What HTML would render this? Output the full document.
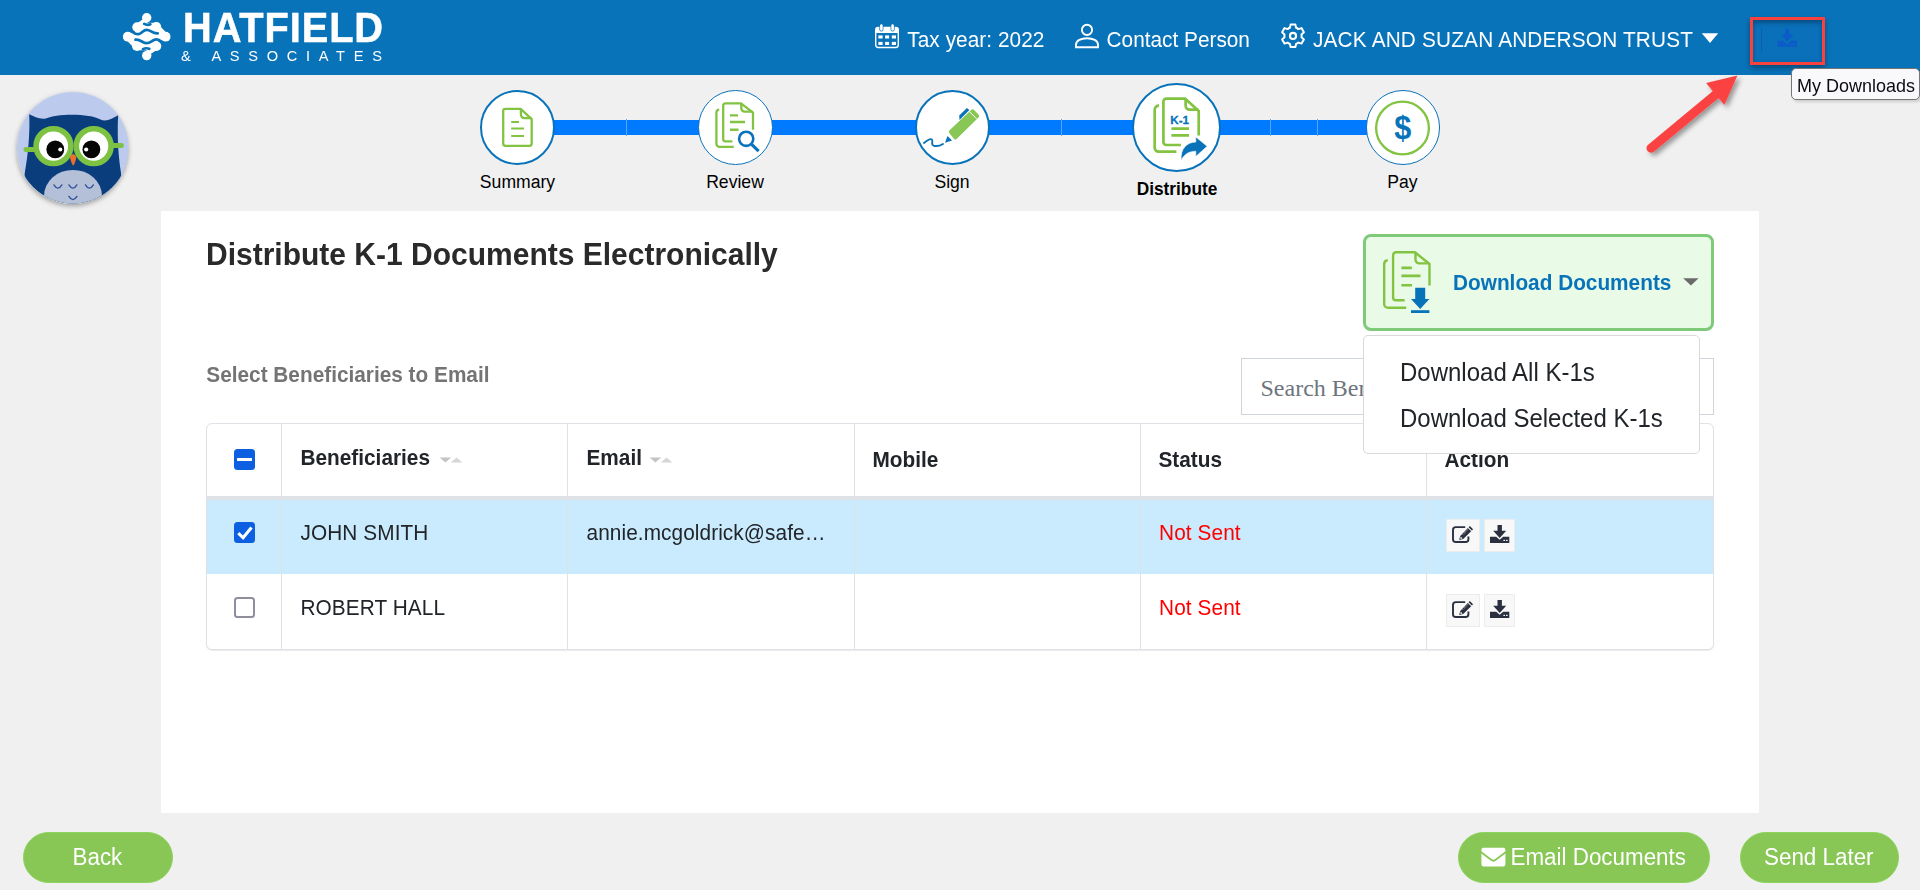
<!DOCTYPE html>
<html>
<head>
<meta charset="utf-8">
<title>Distribute K-1</title>
<style>
html,body{margin:0;padding:0;}
body{width:1920px;height:890px;overflow:hidden;background:#f0f0f0;font-family:"Liberation Sans",sans-serif;position:relative;color:#212529;}
.abs{position:absolute;}
.t{position:absolute;white-space:nowrap;line-height:1;transform:scaleY(1.06);transform-origin:0 84.65%;}
#hdr{position:absolute;left:0;top:0;width:1920px;height:75px;background:#0973ba;}
.ht{color:#fff;font-size:20.8px;}
#panel{position:absolute;left:161px;top:211px;width:1598px;height:601.8px;background:#fff;}
.lbl{position:absolute;font-size:17.6px;color:#000;white-space:nowrap;line-height:1;transform:translateX(-50%) scaleY(1.06);transform-origin:50% 84.65%;}
.circ{position:absolute;border-radius:50%;background:#fff;border:2px solid #0973ba;box-sizing:border-box;}
.bar{position:absolute;top:120px;height:15px;background:#007bff;}
.bdiv{position:absolute;top:119px;height:17px;width:1px;background:#5aa5f5;}
.pill{position:absolute;top:832px;height:50px;border-radius:26px;background:#88c656;border:1px solid #8bd35a;box-sizing:border-box;color:#fff;font-size:22.4px;}
.th{position:absolute;font-weight:bold;font-size:20.8px;color:#212529;white-space:nowrap;line-height:1;transform:scaleY(1.06);transform-origin:0 84.65%;}
.td{position:absolute;font-size:20.8px;color:#212529;white-space:nowrap;line-height:1;transform:scaleY(1.06);transform-origin:0 84.65%;letter-spacing:0.08px;}
.vline{position:absolute;top:424px;width:1px;height:225.4px;background:#dee2e6;}
.abtn{position:absolute;background:#f8f8f8;border:1px solid #ececec;box-sizing:border-box;}
</style>
</head>
<body>
<!--HEADER-->
<div id="hdr"></div>
<svg class="abs" style="left:118px;top:8px" width="60" height="58" viewBox="118 8 60 58">
 <rect x="135" y="27" width="23" height="19" fill="#fff"/>
 <g fill="none" stroke="#fff" stroke-linecap="round">
  <path d="M137.2 27.2 L156.4 26.9" stroke-width="8.4"/>
  <path d="M127.8 36.7 L165.6 36.7" stroke-width="8.8"/>
  <path d="M136.9 46.1 L156.4 46.1" stroke-width="8.4"/>
  <path d="M156.4 26.9 L165.6 36.7" stroke-width="6.6"/>
  <path d="M127.8 36.7 L136.9 46.1" stroke-width="6.6"/>
  <path d="M146.7 17.8 C146.2 23 140.5 22.5 137.2 27.2" stroke-width="5.6"/>
  <path d="M146.7 55.6 C147.2 50.4 153 51 156.4 46.1" stroke-width="5.6"/>
 </g>
 <g fill="#fff">
  <circle cx="146.7" cy="17.8" r="4.7"/><circle cx="137.2" cy="27.2" r="4.9"/><circle cx="156.4" cy="26.9" r="4.8"/>
  <circle cx="127.8" cy="36.7" r="4.9"/><circle cx="165.6" cy="36.7" r="4.9"/>
  <circle cx="136.9" cy="46.1" r="4.9"/><circle cx="156.4" cy="46.1" r="4.9"/><circle cx="146.7" cy="55.6" r="4.7"/>
 </g>
 <g fill="none" stroke="#0973ba" stroke-width="2.7" stroke-linecap="round">
  <path d="M144.2 23.9 Q147.2 25.6 150.4 24.3"/>
  <path d="M130.6 29.8 C132.5 32.8 137 35.2 140 33.6 C142.8 32.2 143.5 29.8 146.7 29.8 C150.5 29.8 152.5 33.9 157.7 33.4"/>
  <path d="M135.5 39.7 C140.5 39 142.5 43.2 146.7 43.2 C150 43.2 151.5 41 154 39.9 C157 38.6 161 40.2 163 43.6"/>
  <path d="M142.9 49.1 Q146 47.6 149.3 48.8"/>
 </g>
 <path d="M126.5 27.5 L131.8 31.4 M167 46 L161.8 42" stroke="#0973ba" stroke-width="3.2" fill="none" stroke-linecap="round"/>
</svg>
<div class="t" id="hat" style="left:183px;top:7.5px;font-size:39.8px;font-weight:bold;color:#fff;line-height:40px;letter-spacing:0.9px;-webkit-text-stroke:0.5px #fff;">HATFIELD</div>
<div class="t" id="assoc" style="left:181px;top:47.5px;font-size:14.6px;color:#fff;letter-spacing:8.7px;line-height:16px;">&amp; ASSOCIATES</div>
<!-- calendar icon -->
<svg class="abs" style="left:875px;top:24px" width="24" height="25" viewBox="0 0 24 25">
 <rect x="0.7" y="3.5" width="22.6" height="20" rx="2.4" fill="none" stroke="#fff" stroke-width="1.4"/>
 <path d="M0.7 9 V5.9 a2.4 2.4 0 0 1 2.4 -2.4 H20.9 a2.4 2.4 0 0 1 2.4 2.4 V9 Z" fill="#fff"/>
 <rect x="4.4" y="-0.4" width="4" height="7.8" rx="2" fill="#0973ba"/>
 <rect x="15.6" y="-0.4" width="4" height="7.8" rx="2" fill="#0973ba"/>
 <rect x="5.1" y="0.3" width="2.6" height="6.4" rx="1.3" fill="#fff"/>
 <rect x="16.3" y="0.3" width="2.6" height="6.4" rx="1.3" fill="#fff"/>
 <g fill="#fff"><rect x="3.4" y="11.4" width="4.2" height="3.1"/><rect x="10.1" y="11.4" width="4" height="3.1"/><rect x="16.8" y="11.4" width="4.2" height="3.1"/>
 <rect x="3.4" y="17.9" width="4.2" height="3.1"/><rect x="10.1" y="17.9" width="4" height="3.1"/><rect x="16.8" y="17.9" width="4.2" height="3.1"/></g>
</svg>
<div class="t ht" id="taxy" style="left:907.3px;top:29.5px;letter-spacing:0.05px;">Tax year: 2022</div>
<!-- user icon -->
<svg class="abs" style="left:1074px;top:23px" width="26" height="27" viewBox="0 0 26 27">
 <circle cx="13" cy="6.9" r="5.1" fill="none" stroke="#fff" stroke-width="1.9"/>
 <path d="M2 24.2 V21.6 C2 17.4 7.2 15.2 13 15.2 C18.8 15.2 24 17.4 24 21.6 V24.2 Z" fill="none" stroke="#fff" stroke-width="1.9" stroke-linejoin="miter"/>
</svg>
<div class="t ht" id="cper" style="left:1106.6px;top:29.5px;">Contact Person</div>
<!-- gear icon -->
<svg class="abs" style="left:1280px;top:23px" width="26" height="26" viewBox="0 0 26 26">
 <path id="gearp" fill="none" stroke="#fff" stroke-width="2" stroke-linejoin="round" d="M10.6 1.6 h4.8 l0.7 3.2 a8.6 8.6 0 0 1 2.3 1.3 l3.1 -1 l2.4 4.2 l-2.4 2.2 a8.6 8.6 0 0 1 0 2.7 l2.4 2.2 l-2.4 4.2 l-3.1 -1 a8.6 8.6 0 0 1 -2.3 1.3 l-0.7 3.2 h-4.8 l-0.7 -3.2 a8.6 8.6 0 0 1 -2.3 -1.3 l-3.1 1 l-2.4 -4.2 l2.4 -2.2 a8.6 8.6 0 0 1 0 -2.7 l-2.4 -2.2 l2.4 -4.2 l3.1 1 a8.6 8.6 0 0 1 2.3 -1.3 z"/>
 <circle cx="13" cy="12.9" r="3.05" fill="none" stroke="#fff" stroke-width="2.1"/>
</svg>
<div class="t ht" id="trust" style="left:1313px;top:29.5px;letter-spacing:0.17px;">JACK AND SUZAN ANDERSON TRUST</div>
<svg class="abs" style="left:1701px;top:33px" width="18" height="11" viewBox="0 0 18 11"><path d="M0.8 0.3 H17.2 L9 10 Z" fill="#fff"/></svg>
<!--STEPPER-->
<div class="bar" style="left:553px;width:147px;"></div>
<div class="bar" style="left:771px;width:146px;"></div>
<div class="bar" style="left:987px;width:148px;"></div>
<div class="bar" style="left:1220px;width:148px;"></div>
<div class="bdiv" style="left:626px"></div>
<div class="bdiv" style="left:1061px"></div>
<div class="bdiv" style="left:1270px"></div>
<div class="bdiv" style="left:1317px"></div>
<div class="circ" style="left:480px;top:90px;width:75px;height:75px;"></div>
<div class="circ" style="left:698px;top:90px;width:75px;height:75px;border-width:1.9px;"></div>
<div class="circ" style="left:914.5px;top:90px;width:75px;height:75px;"></div>
<div class="circ" style="left:1132.4px;top:83.4px;width:89px;height:89px;"></div>
<div class="circ" style="left:1365.5px;top:90px;width:74.6px;height:74.6px;border-width:1.8px;"></div>
<div class="lbl" id="l1" style="left:517.5px;top:173.5px;">Summary</div>
<div class="lbl" id="l2" style="left:735px;top:173.5px;">Review</div>
<div class="lbl" id="l3" style="left:952px;top:173.5px;">Sign</div>
<div class="lbl" id="l4" style="left:1177px;top:180.5px;font-weight:bold;font-size:17.3px;">Distribute</div>
<div class="lbl" id="l5" style="left:1402.5px;top:173.5px;">Pay</div>
<!--ICONS-->
<svg class="abs" style="left:440px;top:80px" width="1020" height="100" viewBox="440 80 1020 100">
 <g fill="none" stroke="#82c341" stroke-width="2.3" stroke-linejoin="round" stroke-linecap="butt">
  <!-- summary doc -->
  <path d="M520.6 108.8 H505.4 a2.2 2.2 0 0 0 -2.2 2.2 V143.6 a2.2 2.2 0 0 0 2.2 2.2 H529.5 a2.2 2.2 0 0 0 2.2 -2.2 V119.2 Z"/>
  <path d="M520.9 108.8 V114.6 a3.6 3.6 0 0 0 3.6 3.6 H531.7"/>
  <path d="M511.2 122 H519 M511.2 128.5 H524 M511.2 136.1 H524" stroke-width="2"/>
  <!-- review docs -->
  <path d="M753 129.8 V112.6 L741 103.3 H725.6 a2.4 2.4 0 0 0 -2.4 2.4 V138.9 a2.4 2.4 0 0 0 2.4 2.4 H732.4"/>
  <path d="M741.3 103.3 V108.3 a3.3 3.3 0 0 0 3.3 3.3 H752.6"/>
  <path d="M719.2 109.6 a3 3 0 0 0 -2.8 3 V143.8 a3.1 3.1 0 0 0 3.1 3.1 H733.8"/>
  <path d="M730 115.4 H738 M730 122 H745 M730 129.8 H738.5" stroke-width="2.4"/>
  <!-- distribute docs -->
  <path d="M1198.7 135.5 V111 L1185 98.6 H1166.3 a2.9 2.9 0 0 0 -2.9 2.9 V142.1 a2.9 2.9 0 0 0 2.9 2.9 H1180.9" stroke-width="2.7"/>
  <path d="M1185.6 98.6 V105.6 a4 4 0 0 0 4 4 H1198.4" stroke-width="2.7"/>
  <path d="M1159 105.7 a4 4 0 0 0 -4.3 4 V147.8 a3.8 3.8 0 0 0 3.8 3.8 H1176.4" stroke-width="2.7"/>
  <path d="M1171.4 128.6 H1189 M1171.4 135.3 H1189" stroke-width="2.7"/>
  <!-- pay -->
  <circle cx="1402.5" cy="128" r="26.4" stroke-width="2.3"/>
 </g>
 <!-- magnifier -->
 <circle cx="746.2" cy="138.8" r="7.1" fill="#fff" stroke="#0973ba" stroke-width="2.6"/>
 <path d="M751.6 144.3 L758.6 151.2" stroke="#0973ba" stroke-width="3.2" fill="none"/>
 <!-- pen -->
 <path d="M949.3 130.6 L971.4 109.8 a1.8 1.8 0 0 1 2.5 0 L978.7 114.7 a1.8 1.8 0 0 1 0 2.5 L956.6 138.9 a1.8 1.8 0 0 1 -2.5 0 L949.3 133.1 a1.8 1.8 0 0 1 0 -2.5 Z" fill="#88c656"/>
 <path d="M969.6 111.8 L976.6 118.8" stroke="#fff" stroke-width="1" fill="none"/>
 <path d="M959.2 115.4 L966.9 108 L969.4 110 L959.5 119.9 Z" fill="#0973ba"/>
 <path d="M947.5 136 L952.1 140.6 L945 142.8 Z" fill="#0973ba"/>
 <path d="M924 143 C927 140.5 930 138 931.8 139.4 C933.5 141 930.5 144.5 933.5 145.6 C936.5 146.6 940.5 145.5 943 144" stroke="#0973ba" stroke-width="1.9" fill="none" stroke-linecap="round"/>
 <!-- K-1 -->
 <text x="1170.2" y="123.6" font-family="Liberation Sans, sans-serif" font-weight="bold" font-size="11.7" fill="#0973ba" stroke="#0973ba" stroke-width="0.3" letter-spacing="0.05">K-1</text>
 <!-- share arrow -->
 <path d="M1207.2 146.3 L1195.8 136.9 V142 C1186.6 142.2 1180.2 149 1181.2 160.2 C1184 154.4 1189 151.3 1195.8 151.2 V156.4 Z" fill="#0973ba" stroke="#fff" stroke-width="0.6"/>
 <!-- dollar -->
 <text transform="translate(1402.7 138.9) scale(0.9 1)" x="0" y="0" text-anchor="middle" font-family="Liberation Sans, sans-serif" font-weight="bold" font-size="34" fill="#0973ba">$</text>
</svg>
<!--OWL-->
<div class="abs" style="left:16.6px;top:92.1px;width:111.6px;height:111.6px;border-radius:50%;box-shadow:0 2px 5px rgba(0,0,0,0.35);"></div>
<svg class="abs" style="left:16.6px;top:92.1px" width="111.6" height="111.6" viewBox="16.6 92.1 111.6 111.6">
 <defs><clipPath id="oc"><circle cx="72.4" cy="147.9" r="55.8"/></clipPath></defs>
 <circle cx="72.4" cy="147.9" r="55.8" fill="#bccbed"/>
 <g clip-path="url(#oc)">
  <path d="M28.8 114.4 C34 116.6 39 119.8 45.5 118.6 C56 113.4 90 113.4 100 119.6 C106 122.4 112 118.6 117.8 115.4 C117 128 117 150 120.5 172 C122 185 118 200 110 210 H34 C26 200 22.5 185 24.5 172 C28.5 150 29.5 128 28.8 114.8 Z" fill="#0a3d7c"/>
  <ellipse cx="72.6" cy="196" rx="29" ry="26" fill="#b3c0d8"/>
  <g fill="none" stroke="#2e4f96" stroke-width="1.3" stroke-linecap="round">
   <path d="M53.5 185 Q57.5 191.5 61.5 185"/><path d="M68.5 185 Q72.5 191.5 76.5 185"/><path d="M85 185 Q89 191.5 93 185"/><path d="M68.5 196.5 Q72.5 203 76.5 196.5"/>
  </g>
  <path d="M25.6 149.6 H36 M111 145.6 H121" stroke="#7dc242" stroke-width="5" stroke-linecap="round" fill="none"/>
  <circle cx="53.1" cy="146.2" r="17.4" fill="#fff" stroke="#7dc242" stroke-width="5.6"/>
  <circle cx="93.3" cy="146.2" r="17.4" fill="#fff" stroke="#7dc242" stroke-width="5.6"/>
  <circle cx="54.9" cy="149.5" r="8.9" fill="#050505"/><circle cx="91" cy="149.5" r="8.9" fill="#050505"/>
  <circle cx="59.9" cy="149.6" r="2.1" fill="#fff"/><circle cx="85.8" cy="149.6" r="2.1" fill="#fff"/>
  <path d="M69.5 156.5 Q72.8 151.5 76.1 156.5 Q75 163 72.8 165.8 Q70.6 163 69.5 156.5 Z" fill="#e8712a"/>
 </g>
</svg>
<!--PANEL-->
<div id="panel"></div>
<div class="t" id="title" style="left:206px;top:240.3px;font-size:30px;font-weight:bold;color:#2a2a2a;">Distribute K-1 Documents Electronically</div>
<div class="t" id="selb" style="left:206.3px;top:364.7px;font-size:20.8px;font-weight:bold;color:#747474;">Select Beneficiaries to Email</div>
<!-- download documents button -->
<div class="abs" style="left:1363px;top:234px;width:351px;height:96.6px;box-sizing:border-box;border:3px solid #7fc97b;border-radius:8px;background:#e9fbe7;"></div>
<svg class="abs" style="left:1378px;top:246px" width="60" height="72" viewBox="1378 246 60 72">
 <g fill="none" stroke="#82c341" stroke-width="2.4" stroke-linejoin="round">
  <path d="M1429.5 285.6 V264 L1415 252.3 H1396 a2.9 2.9 0 0 0 -2.9 2.9 V297.4 a2.9 2.9 0 0 0 2.9 2.9 H1404.6"/>
  <path d="M1415.5 252.3 V259.6 a3.8 3.8 0 0 0 3.8 3.8 H1429.2"/>
  <path d="M1387.7 260.2 a3.8 3.8 0 0 0 -3.5 3.8 V303.9 a3.8 3.8 0 0 0 3.8 3.8 H1406.2"/>
  <path d="M1401.4 267.9 H1411.8 M1401.4 275.9 H1420.5 M1401.4 285.3 H1412" stroke-width="2.6"/>
 </g>
 <path d="M1415.2 287.7 H1425.2 V299 H1429.4 L1420.2 309 L1411 299 H1415.2 Z" fill="#0973ba"/>
 <rect x="1411" y="310.2" width="18.4" height="2.8" fill="#0973ba"/>
</svg>
<div class="t" id="dld" style="left:1453px;top:272.8px;font-size:20.8px;font-weight:bold;color:#0973ba;">Download Documents</div>
<svg class="abs" style="left:1683px;top:278px" width="16" height="8" viewBox="0 0 16 8"><path d="M0.2 0.3 H15.6 L7.9 7.6 Z" fill="#6b6b6b"/></svg>
<!-- search box -->
<div class="abs" style="left:1241px;top:358px;width:473px;height:57px;box-sizing:border-box;border:1px solid #ced4da;background:#fff;"></div>
<div class="t" id="srch" style="left:1260.5px;top:374.3px;font-family:'Liberation Serif',serif;font-size:24px;color:#6c757d;line-height:28px;transform:none;">Search Beneficiaries</div>
<!--TABLE-->
<div class="abs" style="left:206px;top:423px;width:1508px;height:227.2px;box-sizing:border-box;border:1px solid #dee2e6;border-radius:6px;background:#fff;box-shadow:0 1px 1px rgba(0,0,0,0.08);"></div>
<div class="abs" style="left:207px;top:496px;width:1506px;height:3.5px;background:#dee2e6;"></div>
<div class="abs" style="left:207px;top:499.5px;width:1506px;height:74.8px;background:#c9ebfd;"></div>
<div class="vline" style="left:281px"></div>
<div class="vline" style="left:567px"></div>
<div class="vline" style="left:854px"></div>
<div class="vline" style="left:1140px"></div>
<div class="vline" style="left:1426px"></div>
<!-- header cells -->
<div class="abs" style="left:233.7px;top:448.7px;width:21.4px;height:21.4px;border-radius:3.5px;background:#0b5fe0;"></div>
<div class="abs" style="left:236.8px;top:457.6px;width:15.2px;height:3.7px;background:#fff;border-radius:0.5px;"></div>
<div class="th" id="thb" style="left:300.5px;top:447.6px;">Beneficiaries</div>
<div class="th" id="the" style="left:586.5px;top:447.6px;">Email</div>
<div class="th" id="thm" style="left:872.5px;top:449.5px;">Mobile</div>
<div class="th" id="ths" style="left:1158.5px;top:449.5px;">Status</div>
<div class="th" id="tha" style="left:1444.5px;top:449.5px;">Action</div>
<svg class="abs" style="left:438px;top:455px" width="26" height="10" viewBox="438 455 26 10"><path d="M439.6 457.4 H451.2 L445.4 462.6 Z" fill="#c4c4c4"/><path d="M450.8 462.6 L456.6 457.4 L462.4 462.6 Z" fill="#d6d6d6"/></svg>
<svg class="abs" style="left:648px;top:455px" width="26" height="10" viewBox="438 455 26 10"><path d="M439.6 457.4 H451.2 L445.4 462.6 Z" fill="#c4c4c4"/><path d="M450.8 462.6 L456.6 457.4 L462.4 462.6 Z" fill="#d6d6d6"/></svg>
<!-- row 1 -->
<div class="abs" style="left:233.7px;top:521.6px;width:21.4px;height:21.4px;border-radius:3.5px;background:#0b5fe0;"></div>
<svg class="abs" style="left:233.7px;top:521.6px" width="21.4" height="21.4" viewBox="0 0 21.4 21.4"><path d="M4.3 11.2 L9.1 15.8 L17.5 5.6" fill="none" stroke="#fff" stroke-width="3.1" stroke-linecap="butt" stroke-linejoin="miter"/></svg>
<div class="td" id="r1n" style="left:300.5px;top:522.6px;">JOHN SMITH</div>
<div class="td" id="r1e" style="left:586.5px;top:522.6px;">annie.mcgoldrick@safe…</div>
<div class="td" id="r1s" style="left:1159.1px;top:522.6px;color:#ff0000;">Not Sent</div>
<!-- row 2 -->
<div class="abs" style="left:233.7px;top:596.7px;width:21.4px;height:21.4px;border-radius:3.5px;background:#fff;border:2.7px solid #8e8e9c;box-sizing:border-box;"></div>
<div class="td" id="r2n" style="left:300.5px;top:597.6px;">ROBERT HALL</div>
<div class="td" id="r2s" style="left:1159.1px;top:597.6px;color:#ff0000;">Not Sent</div>
<!-- action buttons -->
<div class="abtn" style="left:1445.5px;top:518.5px;width:34px;height:33.8px;"></div>
<div class="abtn" style="left:1483.7px;top:518.5px;width:31.8px;height:33.8px;"></div>
<div class="abtn" style="left:1445.5px;top:593.5px;width:34px;height:33.8px;"></div>
<div class="abtn" style="left:1483.7px;top:593.5px;width:31.8px;height:33.8px;"></div>
<svg class="abs" style="left:1445px;top:518px" width="72" height="36" viewBox="1445 518 72 36">
 <path d="M1468.4 536.6 V539.2 a2.8 2.8 0 0 1 -2.8 2.8 H1455.8 a2.8 2.8 0 0 1 -2.8 -2.8 V529.9 a2.8 2.8 0 0 1 2.8 -2.8 H1465.2" fill="none" stroke="#2b3040" stroke-width="1.9" stroke-linecap="butt"/>
 <path d="M1469.8 526 L1473.1 529.3 L1471.9 530.5 L1468.6 527.2 Z M1467.9 527.9 L1471.2 531.2 L1463.2 539 L1459.2 540 L1460.2 536 Z" fill="#2b3040"/>
 <path d="M1460.7 536.6 L1462.6 538.5 L1460.3 539.1 Z" fill="#f8f8f8"/>
 <path d="M1462.8 534.6 L1468.3 529.2" stroke="#f8f8f8" stroke-width="0.7" fill="none" stroke-dasharray="1 0.8"/>
 <path d="M1497.5 525 H1501.9 V530.8 H1506.2 L1499.7 538 L1493.2 530.8 H1497.5 Z" fill="#2b3040"/>
 <path d="M1490 536.8 H1496.2 L1499.7 539.8 L1503.2 536.8 H1509.3 V543 H1490 Z" fill="#2b3040"/>
 <rect x="1503.4" y="539.8" width="1.6" height="1.2" fill="#f8f8f8"/><rect x="1506" y="539.8" width="1.6" height="1.2" fill="#f8f8f8"/>
</svg>
<svg class="abs" style="left:1445px;top:593px" width="72" height="36" viewBox="1445 518 72 36">
 <path d="M1468.4 536.6 V539.2 a2.8 2.8 0 0 1 -2.8 2.8 H1455.8 a2.8 2.8 0 0 1 -2.8 -2.8 V529.9 a2.8 2.8 0 0 1 2.8 -2.8 H1465.2" fill="none" stroke="#2b3040" stroke-width="1.9" stroke-linecap="butt"/>
 <path d="M1469.8 526 L1473.1 529.3 L1471.9 530.5 L1468.6 527.2 Z M1467.9 527.9 L1471.2 531.2 L1463.2 539 L1459.2 540 L1460.2 536 Z" fill="#2b3040"/>
 <path d="M1460.7 536.6 L1462.6 538.5 L1460.3 539.1 Z" fill="#f8f8f8"/>
 <path d="M1462.8 534.6 L1468.3 529.2" stroke="#f8f8f8" stroke-width="0.7" fill="none" stroke-dasharray="1 0.8"/>
 <path d="M1497.5 525 H1501.9 V530.8 H1506.2 L1499.7 538 L1493.2 530.8 H1497.5 Z" fill="#2b3040"/>
 <path d="M1490 536.8 H1496.2 L1499.7 539.8 L1503.2 536.8 H1509.3 V543 H1490 Z" fill="#2b3040"/>
 <rect x="1503.4" y="539.8" width="1.6" height="1.2" fill="#f8f8f8"/><rect x="1506" y="539.8" width="1.6" height="1.2" fill="#f8f8f8"/>
</svg>
<!--DROPDOWN-->
<div class="abs" style="left:1363.4px;top:335.2px;width:336.2px;height:118.4px;box-sizing:border-box;border:1px solid #d9d9d9;border-radius:5px;background:#fff;"></div>
<div class="t" id="dd1" style="left:1400px;top:359.7px;font-size:24px;color:#212529;line-height:26px;">Download All K-1s</div>
<div class="t" id="dd2" style="left:1400px;top:405.6px;font-size:24px;color:#212529;line-height:26px;">Download Selected K-1s</div>
<!--FOOTER-->
<div class="pill" style="left:22.5px;width:150.5px;top:831.5px;height:51px;"></div>
<div class="t" id="fback" style="left:72.5px;top:846.7px;font-size:22.4px;color:#fff;">Back</div>
<div class="pill" style="left:1457.7px;width:252.5px;top:831.5px;height:51px;"></div>
<svg class="abs" style="left:1481px;top:847px" width="25" height="20" viewBox="0 0 25 20"><path d="M2.6 0.7 H22.2 a2.2 2.2 0 0 1 2.2 2.2 V4.2 L14.2 12 a2.9 2.9 0 0 1 -3.6 0 L0.4 4.2 V2.9 a2.2 2.2 0 0 1 2.2 -2.2 Z M0.4 6.6 L9.6 13.6 a4.6 4.6 0 0 0 5.6 0 L24.4 6.6 V17.2 a2.2 2.2 0 0 1 -2.2 2.2 H2.6 a2.2 2.2 0 0 1 -2.2 -2.2 Z" fill="#fff"/></svg>
<div class="t" id="femail" style="left:1510.5px;top:846.7px;font-size:22.4px;color:#fff;">Email Documents</div>
<div class="pill" style="left:1740px;width:158.5px;top:831.5px;height:51px;"></div>
<div class="t" id="flater" style="left:1764px;top:846.7px;font-size:22.4px;color:#fff;">Send Later</div>
<!--OVERLAY-->
<!-- red highlighted My Downloads button -->
<div class="abs" style="left:1750px;top:17px;width:75px;height:48px;box-sizing:border-box;border:3px solid #f9423d;background:#0a70ba;box-shadow:0 3px 6px rgba(0,0,0,0.36), inset 0 4px 5px -1px rgba(0,0,0,0.26), inset 0 0 4px rgba(0,0,0,0.12);"></div>
<div class="abs" style="left:1761px;top:28px;width:1px;height:24px;background:#0b5fae;"></div>
<svg class="abs" style="left:1776px;top:28px" width="22" height="20" viewBox="1776 28 22 20">
 <path d="M1785 28.8 H1789.4 V34.6 H1793.6 L1787.2 41.6 L1780.8 34.6 H1785 Z" fill="#0b5cc9"/>
 <path d="M1777.4 40.6 H1783 L1787.2 44.4 L1791.4 40.6 H1797 V46.8 H1777.4 Z" fill="#0b5cc9"/>
 <rect x="1791.2" y="43.6" width="1.6" height="1.3" fill="#0a70ba"/><rect x="1793.8" y="43.6" width="1.6" height="1.3" fill="#0a70ba"/>
</svg>
<!-- arrow -->
<svg class="abs" style="left:1630px;top:66px;overflow:visible" width="130" height="110" viewBox="1630 66 130 110">
 <defs><filter id="ash" x="-20%" y="-20%" width="150%" height="150%"><feGaussianBlur in="SourceAlpha" stdDeviation="2.4"/><feOffset dx="2.5" dy="3"/><feComponentTransfer><feFuncA type="linear" slope="0.38"/></feComponentTransfer><feMerge><feMergeNode/><feMergeNode in="SourceGraphic"/></feMerge></filter></defs>
 <g filter="url(#ash)">
  <path d="M1651 148.2 L1717 93.5" stroke="#fa4343" stroke-width="9" stroke-linecap="round" fill="none"/>
  <path d="M1737.4 75.4 L1706.1 82.9 L1724.4 105.1 Z" fill="#fa4343"/>
 </g>
</svg>
<!-- tooltip -->
<div class="abs" style="left:1791px;top:68px;width:128.5px;height:31.6px;box-sizing:border-box;border:1px solid #767676;border-radius:5px;background:#f9f9fb;box-shadow:2px 2px 3px rgba(0,0,0,0.15);"></div>
<div class="t" id="tip" style="left:1797px;top:76.6px;font-size:18px;color:#0b0b14;">My Downloads</div>
</body>
</html>
